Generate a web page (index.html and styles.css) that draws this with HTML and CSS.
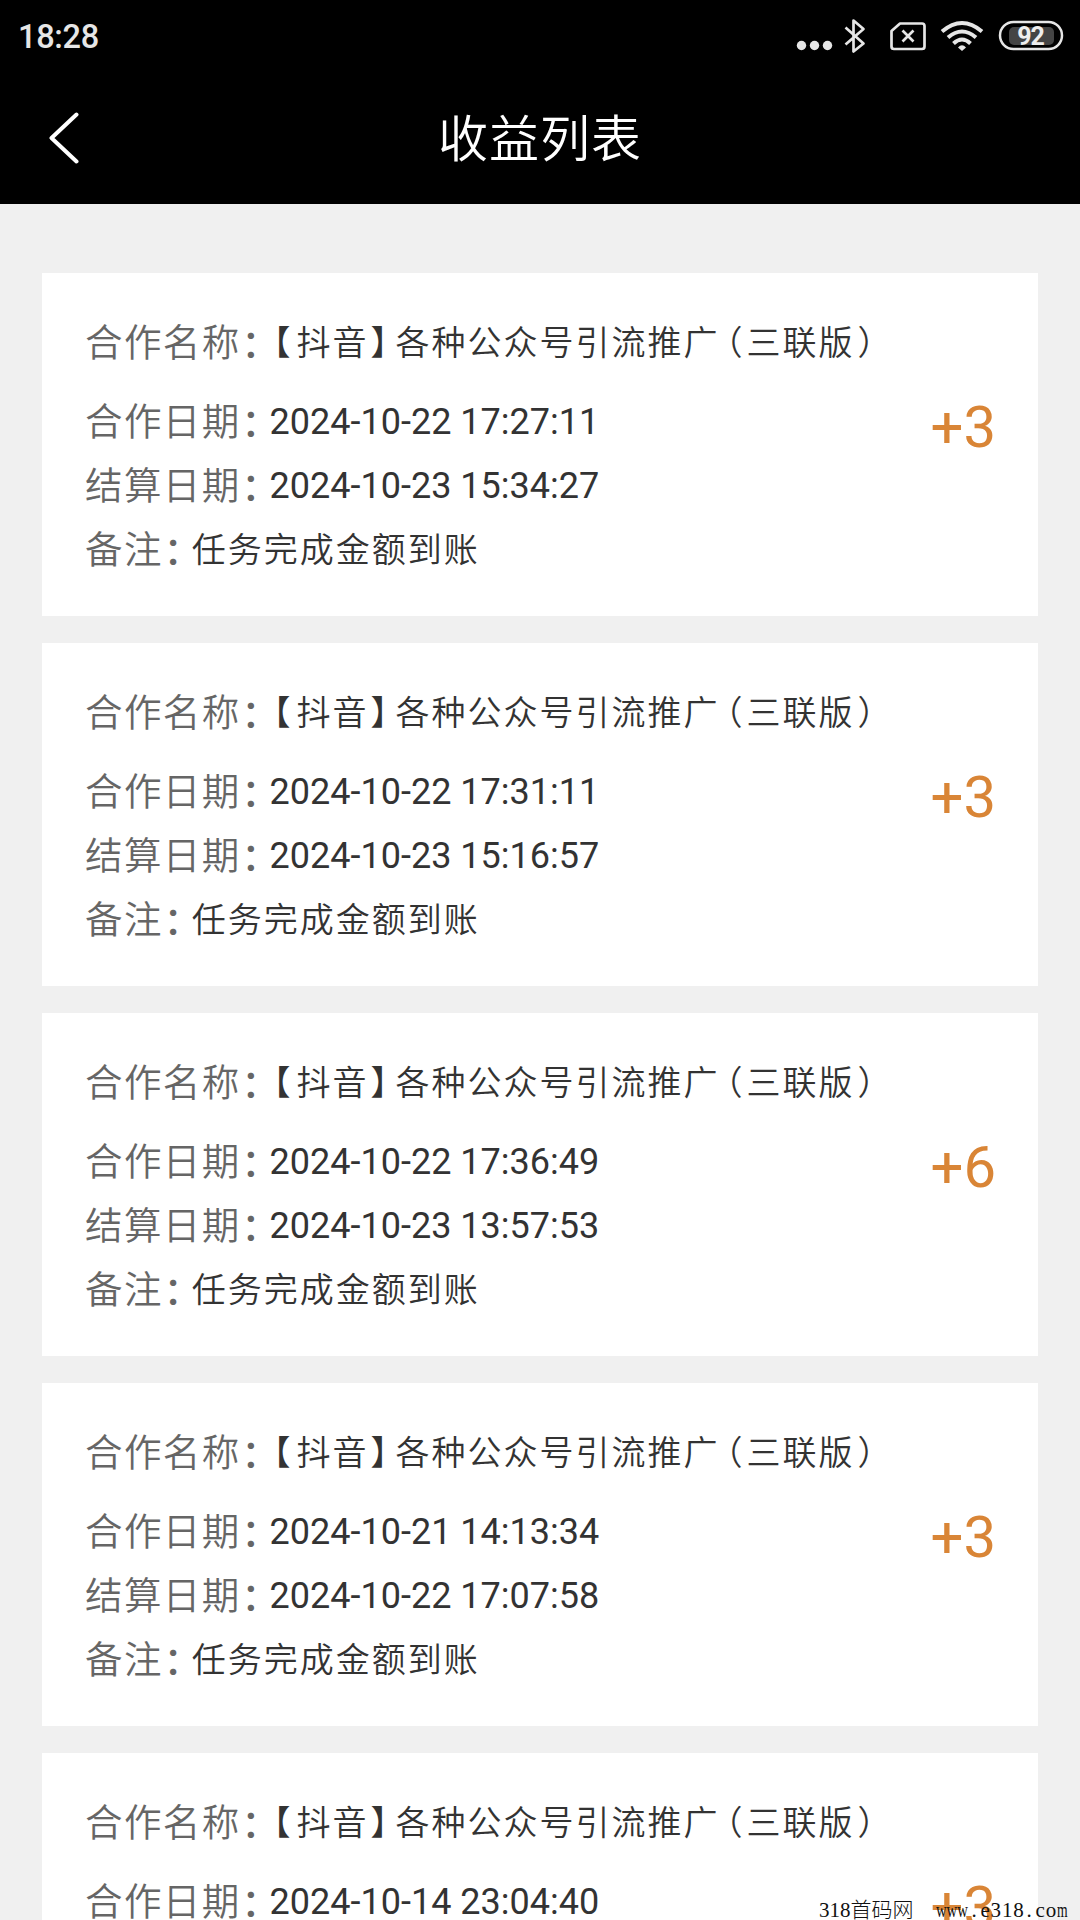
FILE: index.html
```html
<!DOCTYPE html>
<html lang="zh-CN">
<head>
    <meta charset="UTF-8">
    <meta name="viewport" content="width=device-width, initial-scale=1.0">
    <link rel="stylesheet" href="styles.css">
    <title>收益列表</title>
</head>
<body>
    <div class="header">
        <div class="status-bar">
            <span class="time">18:28</span>
            <svg class="status-icons" width="280" height="60" viewBox="0 0 280 60" fill="none" stroke="#e6e6e6">
                <g fill="#e6e6e6" stroke="none">
                    <circle cx="11.5" cy="45.5" r="4.7"/>
                    <circle cx="24.5" cy="45.5" r="4.7"/>
                    <circle cx="37.5" cy="45.5" r="4.7"/>
                </g>
                <path d="M55.5 27.5L73.5 43.5L63.5 51.5V20.5L73.5 29L55.5 44.5" stroke-width="2.7" stroke-linejoin="round"/>
                <path d="M110 23.5H132Q134.500 23.5 134.5 26V46.5Q134.5 49 132 49H104Q101.5 49 101.5 46.5V31Z" stroke-width="2.7" stroke-linejoin="round"/>
                <path d="M112.5 30.5L123.5 41.5M123.5 30.5L112.5 41.5" stroke-width="2.7"/>
                <path d="M152 31.5Q172 14.5 192 31.5M158 37.5Q172 25.5 186 37.5M163.5 43.5Q172 35.5 180.5 43.5" stroke-width="4"/>
                <path d="M168 47.5Q172 43 176 47.5L172 51Z" fill="#e6e6e6" stroke="none"/>
                <rect x="219" y="27" width="45" height="18" rx="5" fill="#444" stroke="none"/>
                <rect x="210" y="22" width="62" height="27" rx="13.5" stroke-width="2.5"/>
                <text class="battery" x="240.5" y="44.5" text-anchor="middle">92</text>
            </svg>
        </div>
        <div class="nav-bar">
            <svg class="back" width="30" height="52" viewBox="0 0 30 52" fill="none" stroke="#fff" stroke-width="4" stroke-linecap="round" stroke-linejoin="round">
                <path d="M27.5 2.5L2.5 26L27.5 49.5"/>
            </svg>
            <h1 class="title">收益列表</h1>
        </div>
    </div>

    <div class="list">
        <div class="card">
            <div class="info">
                <div class="row name"><span class="label">合作名称<i class="colon">：</i></span><span class="value"><i class="lb">【</i>抖音<i class="rb">】</i>各种公众号引流推广<i class="lp">（</i>三联版<i class="rp">）</i></span></div>
                <div class="row"><span class="label">合作日期<i class="colon">：</i></span><span class="date">2024-10-22 17:27:11</span></div>
                <div class="row"><span class="label">结算日期<i class="colon">：</i></span><span class="date">2024-10-23 15:34:27</span></div>
                <div class="row"><span class="label">备注<i class="colon">：</i></span><span class="value">任务完成金额到账</span></div>
            </div>
            <div class="amount">+3</div>
        </div>
        <div class="card">
            <div class="info">
                <div class="row name"><span class="label">合作名称<i class="colon">：</i></span><span class="value"><i class="lb">【</i>抖音<i class="rb">】</i>各种公众号引流推广<i class="lp">（</i>三联版<i class="rp">）</i></span></div>
                <div class="row"><span class="label">合作日期<i class="colon">：</i></span><span class="date">2024-10-22 17:31:11</span></div>
                <div class="row"><span class="label">结算日期<i class="colon">：</i></span><span class="date">2024-10-23 15:16:57</span></div>
                <div class="row"><span class="label">备注<i class="colon">：</i></span><span class="value">任务完成金额到账</span></div>
            </div>
            <div class="amount">+3</div>
        </div>
        <div class="card">
            <div class="info">
                <div class="row name"><span class="label">合作名称<i class="colon">：</i></span><span class="value"><i class="lb">【</i>抖音<i class="rb">】</i>各种公众号引流推广<i class="lp">（</i>三联版<i class="rp">）</i></span></div>
                <div class="row"><span class="label">合作日期<i class="colon">：</i></span><span class="date">2024-10-22 17:36:49</span></div>
                <div class="row"><span class="label">结算日期<i class="colon">：</i></span><span class="date">2024-10-23 13:57:53</span></div>
                <div class="row"><span class="label">备注<i class="colon">：</i></span><span class="value">任务完成金额到账</span></div>
            </div>
            <div class="amount">+6</div>
        </div>
        <div class="card">
            <div class="info">
                <div class="row name"><span class="label">合作名称<i class="colon">：</i></span><span class="value"><i class="lb">【</i>抖音<i class="rb">】</i>各种公众号引流推广<i class="lp">（</i>三联版<i class="rp">）</i></span></div>
                <div class="row"><span class="label">合作日期<i class="colon">：</i></span><span class="date">2024-10-21 14:13:34</span></div>
                <div class="row"><span class="label">结算日期<i class="colon">：</i></span><span class="date">2024-10-22 17:07:58</span></div>
                <div class="row"><span class="label">备注<i class="colon">：</i></span><span class="value">任务完成金额到账</span></div>
            </div>
            <div class="amount">+3</div>
        </div>
        <div class="card">
            <div class="info">
                <div class="row name"><span class="label">合作名称<i class="colon">：</i></span><span class="value"><i class="lb">【</i>抖音<i class="rb">】</i>各种公众号引流推广<i class="lp">（</i>三联版<i class="rp">）</i></span></div>
                <div class="row"><span class="label">合作日期<i class="colon">：</i></span><span class="date">2024-10-14 23:04:40</span></div>
            </div>
            <div class="amount">+3</div>
        </div>
    </div>

    <div class="watermark">
        <span>318首码网</span>
        <span class="site"><i class="narrow-w">www</i><i class="dot">.</i>e318<i class="dot">.</i>co<i class="narrow-m">m</i></span>
    </div>
</body>
</html>
```
FILE: styles.css
```css
* {
    box-sizing: border-box;
}

body {
    margin: 0;
    height: 1920px;
    overflow: hidden;
    position: relative;
    background-color: #f0f0f0;
    font-family: Roboto, "Noto Sans CJK SC", sans-serif;
}

i {
    font-style: normal;
}

.header {
    height: 204px;
    background-color: #000;
    color: #fff;
}

.status-bar {
    display: flex;
    justify-content: space-between;
    height: 72px;
    padding: 0 10px 0 18px;
}

.time {
    font-size: 32.5px;
    font-weight: 500;
    line-height: 74px;
    letter-spacing: -0.3px;
    color: #e6e6e6;
}

.status-icons {
    flex-shrink: 0;
}

.battery {
    font-size: 25px;
    font-weight: 700;
    letter-spacing: -1px;
    fill: #eee;
    stroke: none;
}

.nav-bar {
    display: grid;
    grid-template-columns: 100px 1fr 100px;
    align-items: center;
    height: 132px;
}

.back {
    margin-left: 49px;
}

.title {
    margin: 0;
    font-family: "Noto Sans CJK SC", sans-serif;
    font-size: 50px;
    font-weight: 350;
    letter-spacing: 1px;
    line-height: 126px;
    height: 132px;
    text-align: center;
}

.list {
    display: flex;
    flex-direction: column;
    gap: 27px;
    height: 1716px;
    overflow: hidden;
    padding: 69px 42px 0;
}

.card {
    display: flex;
    justify-content: space-between;
    height: 343px;
    flex-shrink: 0;
    padding: 36px 42px 0 43px;
    background-color: #fff;
}

.row {
    display: flex;
    height: 64px;
    line-height: 64px;
    white-space: nowrap;
}

.name {
    margin-bottom: 15px;
}

.label {
    font-family: "Noto Sans CJK SC", sans-serif;
    font-size: 37.5px;
    font-weight: 350;
    letter-spacing: 1.4px;
    line-height: 62px;
    color: #666;
}

/* punctuation is set tighter than the full-width cell */
.colon, .lb, .rb, .lp, .rp {
    display: inline-block;
    height: 64px;
    vertical-align: top;
    letter-spacing: 0;
    font-feature-settings: "halt";
}

.colon {
    width: 29px;
    text-indent: 1px;
    font-weight: 500;
    line-height: 64px;
}

.value {
    font-family: "Noto Sans CJK SC", sans-serif;
    font-size: 34px;
    font-weight: 350;
    letter-spacing: 2px;
    line-height: 64px;
    color: #333;
}

.lb {
    width: 27px;
    text-indent: 4px;
}

.rb {
    width: 27px;
    text-indent: 2px;
}

.lp {
    width: 27px;
    text-indent: 6px;
}

.rp {
    width: 26px;
    text-indent: 3px;
}

.date {
    font-size: 36px;
    line-height: 68px;
    color: #333;
}

.amount {
    padding-top: 82px;
    font-size: 58px;
    line-height: 72px;
    color: #d98536;
}

.watermark {
    position: absolute;
    left: 819px;
    bottom: -2px;
    display: flex;
    gap: 22px;
    font-family: "Liberation Serif", "Noto Sans CJK SC", serif;
    font-size: 21px;
    font-weight: 300;
    line-height: 24px;
    color: #111;
    white-space: nowrap;
}

.site {
    letter-spacing: 0.8px;
}

.narrow-w, .narrow-m, .dot {
    display: inline-block;
    letter-spacing: 0;
}

.narrow-w {
    width: 34px;
    transform: scaleX(0.7);
    transform-origin: left;
}

.narrow-m {
    width: 11px;
    transform: scaleX(0.65);
    transform-origin: left;
}

.dot {
    width: 11px;
    text-indent: 2px;
}
```
